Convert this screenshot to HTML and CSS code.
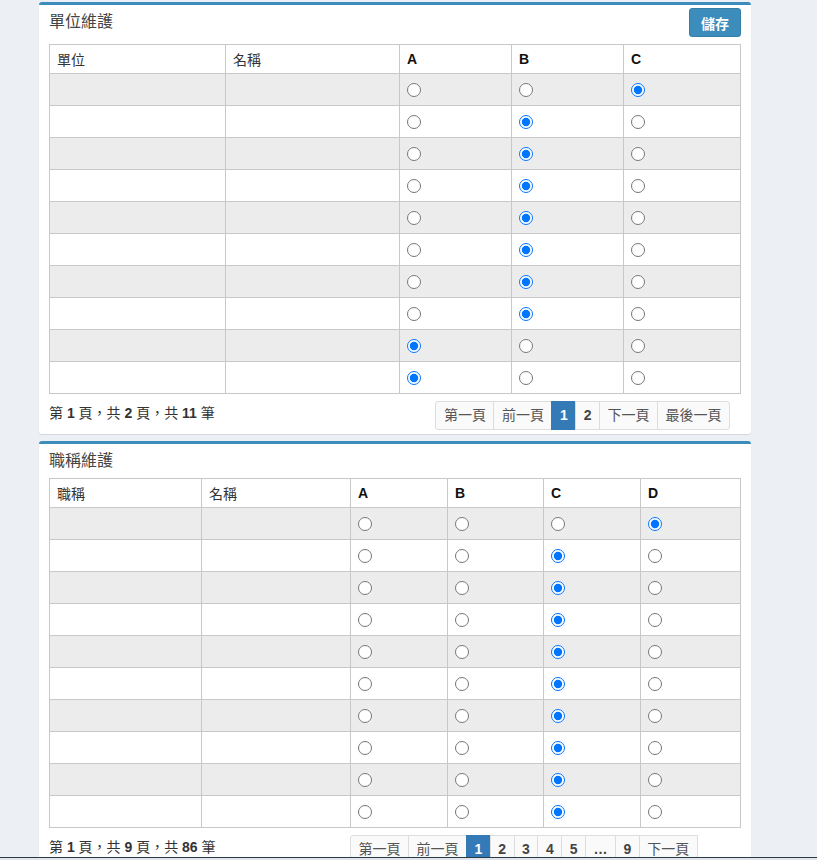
FILE: index.html
```html
<!DOCTYPE html>
<html lang="zh-Hant">
<head>
<meta charset="utf-8">
<title>維護</title>
<link rel="stylesheet" href="styles.css">
</head>
<body>
<div class="box">
  <div class="box-header">
    <h3 class="box-title">單位維護</h3>
    <button class="btn-save" type="button">儲存</button>
  </div>
  <table class="grid">
    <colgroup><col style="width:176px"><col style="width:174px"><col style="width:112px"><col style="width:112px"><col></colgroup>
    <thead>
      <tr><th><div class="hcell cjk">單位</div></th><th><div class="hcell cjk">名稱</div></th><th><div class="hcell">A</div></th><th><div class="hcell">B</div></th><th><div class="hcell">C</div></th></tr>
    </thead>
    <tbody>
      <tr><td><div class="cell"></div></td><td><div class="cell"></div></td><td><div class="cell"><input type="radio" name="u1"></div></td><td><div class="cell"><input type="radio" name="u1"></div></td><td><div class="cell"><input type="radio" name="u1" checked></div></td></tr>
      <tr><td><div class="cell"></div></td><td><div class="cell"></div></td><td><div class="cell"><input type="radio" name="u2"></div></td><td><div class="cell"><input type="radio" name="u2" checked></div></td><td><div class="cell"><input type="radio" name="u2"></div></td></tr>
      <tr><td><div class="cell"></div></td><td><div class="cell"></div></td><td><div class="cell"><input type="radio" name="u3"></div></td><td><div class="cell"><input type="radio" name="u3" checked></div></td><td><div class="cell"><input type="radio" name="u3"></div></td></tr>
      <tr><td><div class="cell"></div></td><td><div class="cell"></div></td><td><div class="cell"><input type="radio" name="u4"></div></td><td><div class="cell"><input type="radio" name="u4" checked></div></td><td><div class="cell"><input type="radio" name="u4"></div></td></tr>
      <tr><td><div class="cell"></div></td><td><div class="cell"></div></td><td><div class="cell"><input type="radio" name="u5"></div></td><td><div class="cell"><input type="radio" name="u5" checked></div></td><td><div class="cell"><input type="radio" name="u5"></div></td></tr>
      <tr><td><div class="cell"></div></td><td><div class="cell"></div></td><td><div class="cell"><input type="radio" name="u6"></div></td><td><div class="cell"><input type="radio" name="u6" checked></div></td><td><div class="cell"><input type="radio" name="u6"></div></td></tr>
      <tr><td><div class="cell"></div></td><td><div class="cell"></div></td><td><div class="cell"><input type="radio" name="u7"></div></td><td><div class="cell"><input type="radio" name="u7" checked></div></td><td><div class="cell"><input type="radio" name="u7"></div></td></tr>
      <tr><td><div class="cell"></div></td><td><div class="cell"></div></td><td><div class="cell"><input type="radio" name="u8"></div></td><td><div class="cell"><input type="radio" name="u8" checked></div></td><td><div class="cell"><input type="radio" name="u8"></div></td></tr>
      <tr><td><div class="cell"></div></td><td><div class="cell"></div></td><td><div class="cell"><input type="radio" name="u9" checked></div></td><td><div class="cell"><input type="radio" name="u9"></div></td><td><div class="cell"><input type="radio" name="u9"></div></td></tr>
      <tr><td><div class="cell"></div></td><td><div class="cell"></div></td><td><div class="cell"><input type="radio" name="u10" checked></div></td><td><div class="cell"><input type="radio" name="u10"></div></td><td><div class="cell"><input type="radio" name="u10"></div></td></tr>
    </tbody>
  </table>
  <div class="footer-row">
    <div class="info">第 <b>1</b> 頁，共 <b>2</b> 頁，共 <b>11</b> 筆</div>
    <div class="pager-wrap">
      <ul class="pagination">
        <li class="first">第一頁</li><li>前一頁</li><li class="num active">1</li><li class="num">2</li><li>下一頁</li><li class="last">最後一頁</li>
      </ul>
    </div>
  </div>
</div>

<div class="box">
  <div class="box-header">
    <h3 class="box-title">職稱維護</h3>
  </div>
  <table class="grid">
    <colgroup><col style="width:152px"><col style="width:149px"><col style="width:97px"><col style="width:96px"><col style="width:97px"><col></colgroup>
    <thead>
      <tr><th><div class="hcell cjk">職稱</div></th><th><div class="hcell cjk">名稱</div></th><th><div class="hcell">A</div></th><th><div class="hcell">B</div></th><th><div class="hcell">C</div></th><th><div class="hcell">D</div></th></tr>
    </thead>
    <tbody>
      <tr><td><div class="cell"></div></td><td><div class="cell"></div></td><td><div class="cell"><input type="radio" name="j1"></div></td><td><div class="cell"><input type="radio" name="j1"></div></td><td><div class="cell"><input type="radio" name="j1"></div></td><td><div class="cell"><input type="radio" name="j1" checked></div></td></tr>
      <tr><td><div class="cell"></div></td><td><div class="cell"></div></td><td><div class="cell"><input type="radio" name="j2"></div></td><td><div class="cell"><input type="radio" name="j2"></div></td><td><div class="cell"><input type="radio" name="j2" checked></div></td><td><div class="cell"><input type="radio" name="j2"></div></td></tr>
      <tr><td><div class="cell"></div></td><td><div class="cell"></div></td><td><div class="cell"><input type="radio" name="j3"></div></td><td><div class="cell"><input type="radio" name="j3"></div></td><td><div class="cell"><input type="radio" name="j3" checked></div></td><td><div class="cell"><input type="radio" name="j3"></div></td></tr>
      <tr><td><div class="cell"></div></td><td><div class="cell"></div></td><td><div class="cell"><input type="radio" name="j4"></div></td><td><div class="cell"><input type="radio" name="j4"></div></td><td><div class="cell"><input type="radio" name="j4" checked></div></td><td><div class="cell"><input type="radio" name="j4"></div></td></tr>
      <tr><td><div class="cell"></div></td><td><div class="cell"></div></td><td><div class="cell"><input type="radio" name="j5"></div></td><td><div class="cell"><input type="radio" name="j5"></div></td><td><div class="cell"><input type="radio" name="j5" checked></div></td><td><div class="cell"><input type="radio" name="j5"></div></td></tr>
      <tr><td><div class="cell"></div></td><td><div class="cell"></div></td><td><div class="cell"><input type="radio" name="j6"></div></td><td><div class="cell"><input type="radio" name="j6"></div></td><td><div class="cell"><input type="radio" name="j6" checked></div></td><td><div class="cell"><input type="radio" name="j6"></div></td></tr>
      <tr><td><div class="cell"></div></td><td><div class="cell"></div></td><td><div class="cell"><input type="radio" name="j7"></div></td><td><div class="cell"><input type="radio" name="j7"></div></td><td><div class="cell"><input type="radio" name="j7" checked></div></td><td><div class="cell"><input type="radio" name="j7"></div></td></tr>
      <tr><td><div class="cell"></div></td><td><div class="cell"></div></td><td><div class="cell"><input type="radio" name="j8"></div></td><td><div class="cell"><input type="radio" name="j8"></div></td><td><div class="cell"><input type="radio" name="j8" checked></div></td><td><div class="cell"><input type="radio" name="j8"></div></td></tr>
      <tr><td><div class="cell"></div></td><td><div class="cell"></div></td><td><div class="cell"><input type="radio" name="j9"></div></td><td><div class="cell"><input type="radio" name="j9"></div></td><td><div class="cell"><input type="radio" name="j9" checked></div></td><td><div class="cell"><input type="radio" name="j9"></div></td></tr>
      <tr><td><div class="cell"></div></td><td><div class="cell"></div></td><td><div class="cell"><input type="radio" name="j10"></div></td><td><div class="cell"><input type="radio" name="j10"></div></td><td><div class="cell"><input type="radio" name="j10" checked></div></td><td><div class="cell"><input type="radio" name="j10"></div></td></tr>
    </tbody>
  </table>
  <div class="footer-row">
    <div class="info">第 <b>1</b> 頁，共 <b>9</b> 頁，共 <b>86</b> 筆</div>
    <div class="pager-wrap">
      <ul class="pagination">
        <li class="first">第一頁</li><li>前一頁</li><li class="num active">1</li><li class="num">2</li><li class="num">3</li><li class="num">4</li><li class="num">5</li><li class="num">…</li><li class="num">9</li><li>下一頁</li><li class="last">最後一頁</li>
      </ul>
    </div>
  </div>
</div>
<div class="bottom-bar"></div>
</body>
</html>
```
FILE: styles.css
```css
* { box-sizing: border-box; }

body {
  margin: 0;
  padding: 2px 0 0 39px;
  background: #ecf0f5;
  font-family: "Liberation Sans", "Noto Sans CJK TC", sans-serif;
  font-size: 14px;
  color: #333;
}

.box {
  width: 712px;
  background: #fff;
  border-top: 3px solid #3c8dbc;
  border-radius: 3px;
  box-shadow: 0 1px 1px rgba(0, 0, 0, 0.1);
  padding: 0 10px 4px;
  margin-bottom: 7px;
}

.box-header {
  display: flex;
  justify-content: space-between;
  align-items: flex-start;
}

.box-title {
  margin: 0;
  padding: 6px 0;
  font-size: 16px;
  font-weight: normal;
  line-height: 22px;
  color: #444;
}

.btn-save {
  margin: 3px 0 7px 0;
  width: 52px;
  height: 29px;
  padding: 0;
  background: #3c8dbc;
  border: 1px solid #367fa9;
  border-radius: 3px;
  color: #fff;
  font-family: "Liberation Sans", "Noto Sans CJK TC", sans-serif;
  font-size: 14px;
  font-weight: bold;
}

.grid {
  width: 100%;
  border-collapse: collapse;
  table-layout: fixed;
}

.grid th,
.grid td {
  border: 1px solid #c8c8c8;
  padding: 0 7px;
  text-align: left;
  vertical-align: middle;
}

.hcell {
  height: 28px;
  display: flex;
  align-items: center;
  font-weight: bold;
  color: #111;
}

.hcell.cjk {
  font-weight: normal;
  color: #333;
}

.cell {
  height: 31px;
  display: flex;
  align-items: center;
}

.grid tbody tr:nth-child(odd) td {
  background: #ececec;
}

.cell input {
  margin: 0;
  width: 14px;
  height: 14px;
}

.footer-row {
  display: flex;
  justify-content: space-between;
  align-items: flex-start;
  margin-top: 7px;
}

.info {
  padding-top: 2px;
  line-height: 20px;
  color: #333;
}

.pager-wrap {
  width: 380px;
  margin-right: 11px;
  display: flex;
  justify-content: flex-end;
}

.pagination {
  display: flex;
  flex-wrap: wrap;
  list-style: none;
  margin: 0;
  padding: 0 0 0 1px;
}

.pagination li {
  margin-left: -1px;
  padding: 4px 7.5px;
  line-height: 19px;
  border: 1px solid #ddd;
  background: #fafafa;
  color: #555;
}

.pagination li.num {
  font-weight: bold;
  color: #444;
}

.pagination li.active {
  background: #337ab7;
  border-color: #337ab7;
  color: #fff;
}

.pagination li.first {
  border-radius: 3px 0 0 3px;
}

.pagination li.last {
  border-radius: 0 3px 3px 0;
}

.bottom-bar {
  position: fixed;
  left: 0;
  right: 0;
  bottom: 0;
  height: 3px;
  border-top: 1px solid #2b3a45;
  background: #dfe5ea;
}
```
